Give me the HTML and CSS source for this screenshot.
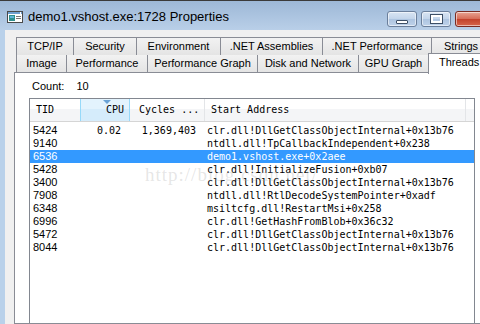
FILE: index.html
```html
<!DOCTYPE html>
<html>
<head>
<meta charset="utf-8">
<link rel="stylesheet" href="styles.css">
</head>
<body>
<div class="window">
  <div class="titlebar">
    <svg class="appicon" width="16" height="12" viewBox="0 0 16 12">
      <rect x="0.5" y="0.5" width="15" height="11" fill="#fff" stroke="#4a4a4a"/>
      <rect x="1" y="1" width="14" height="2" fill="#6f9fd0"/>
      <rect x="2" y="4" width="6" height="6" fill="#2f8f8f"/>
      <rect x="3" y="5" width="4" height="2" fill="#5fb7d9"/>
      <rect x="9" y="5" width="5" height="1" fill="#777"/>
      <rect x="9" y="7" width="5" height="1" fill="#777"/>
      <rect x="13" y="1" width="1" height="2" fill="#fff"/>
    </svg>
    <span class="title">demo1.vshost.exe:1728 Properties</span>
    <div class="caption-btns">
      <div class="cbtn"><span class="min-glyph"></span></div>
      <div class="cbtn"><span class="max-glyph"></span></div>
      <div class="cbtn close"></div>
    </div>
  </div>
  <div class="frame">
    <div class="frame-left"></div>
    <div class="client">
      <div class="tabs">
        <div class="tabrow">
          <div class="tab w57">TCP/IP</div>
          <div class="tab w63">Security</div>
          <div class="tab w84">Environment</div>
          <div class="tab w102">.NET Assemblies</div>
          <div class="tab w109">.NET Performance</div>
          <div class="tab w60">Strings</div>
        </div>
        <div class="tabrow row2">
          <div class="tab w50">Image</div>
          <div class="tab w81">Performance</div>
          <div class="tab w110">Performance Graph</div>
          <div class="tab w101">Disk and Network</div>
          <div class="tab w70">GPU Graph</div>
          <div class="tab selected">Threads</div>
        </div>
      </div>
      <div class="page">
        <div class="count"><span>Count:</span><span class="count-val">10</span></div>
        <div class="list">
          <div class="header">
            <div class="hcell c-tid">TID</div>
            <div class="hcell c-cpu sorted"><span class="sort-arrow"></span>CPU</div>
            <div class="hcell c-cyc">Cycles ...</div>
            <div class="hcell c-addr">Start Address</div>
            <div class="hcell c-fill"></div>
          </div>
          <div class="rows">
            <div class="row"><span class="tid">5424</span><span class="num">0.02</span><span class="num">1,369,403</span><span class="addr">clr.dll!DllGetClassObjectInternal+0x13b76</span></div>
            <div class="row"><span class="tid">9140</span><span class="num"></span><span class="num"></span><span class="addr">ntdll.dll!TpCallbackIndependent+0x238</span></div>
            <div class="row sel"><span class="tid">6536</span><span class="num"></span><span class="num"></span><span class="addr">demo1.vshost.exe+0x2aee</span></div>
            <div class="row"><span class="tid">5428</span><span class="num"></span><span class="num"></span><span class="addr">clr.dll!InitializeFusion+0xb07</span></div>
            <div class="row"><span class="tid">3400</span><span class="num"></span><span class="num"></span><span class="addr">clr.dll!DllGetClassObjectInternal+0x13b76</span></div>
            <div class="row"><span class="tid">7908</span><span class="num"></span><span class="num"></span><span class="addr">ntdll.dll!RtlDecodeSystemPointer+0xadf</span></div>
            <div class="row"><span class="tid">6348</span><span class="num"></span><span class="num"></span><span class="addr">msiltcfg.dll!RestartMsi+0x258</span></div>
            <div class="row"><span class="tid">6996</span><span class="num"></span><span class="num"></span><span class="addr">clr.dll!GetHashFromBlob+0x36c32</span></div>
            <div class="row"><span class="tid">5472</span><span class="num"></span><span class="num"></span><span class="addr">clr.dll!DllGetClassObjectInternal+0x13b76</span></div>
            <div class="row"><span class="tid">8044</span><span class="num"></span><span class="num"></span><span class="addr">clr.dll!DllGetClassObjectInternal+0x13b76</span></div>
          </div>
          <div class="watermark">http://blog.csdn.net/</div>
        </div>
      </div>
    </div>
  </div>
</div>
</body>
</html>
```

FILE: styles.css
```css
* { box-sizing: border-box; }
html, body { margin: 0; padding: 0; }
body {
  width: 480px;
  height: 324px;
  overflow: hidden;
  font-family: "Liberation Sans", Arial, sans-serif;
  font-size: 11px;
  color: #000;
  background: #f0f0f0;
}
.window {
  width: 480px;
  height: 324px;
  display: flex;
  flex-direction: column;
  overflow: hidden;
}
.titlebar {
  height: 30px;
  flex: none;
  border-top: 1px solid #3a3a3a;
  background: linear-gradient(#9db8d7, #b9cfe8);
  display: flex;
  align-items: center;
  padding-left: 7px;
  position: relative;
}
.appicon { flex: none; margin-top: 2px; }
.title {
  font-size: 13px;
  margin-left: 5px;
  margin-top: 2px;
  color: #000;
  white-space: nowrap;
}
.caption-btns {
  margin-left: auto;
  display: flex;
  gap: 4px;
  align-self: flex-start;
  margin-top: 10px;
  margin-right: -18px;
}
.cbtn {
  width: 30px;
  height: 16px;
  border: 1px solid #6b7f9b;
  border-radius: 3px;
  background: linear-gradient(#d9e5f3 0%, #c2d4ea 50%, #adc4e0 51%, #bed2ea 100%);
  box-shadow: inset 0 0 0 1px rgba(255,255,255,0.55);
  display: flex;
  align-items: center;
  justify-content: center;
}
.cbtn.close {
  width: 43px;
  border-color: #7a2b22;
  background: linear-gradient(#e8a493 0%, #d66b56 50%, #c2412b 51%, #d6664c 100%);
}
.min-glyph {
  width: 12px;
  height: 4px;
  margin-top: 5px;
  background: #fff;
  border: 1px solid #3d4f66;
  border-radius: 1px;
}
.max-glyph {
  width: 11px;
  height: 8px;
  border: 2px solid #fff;
  outline: 1px solid #3d4f66;
}
.frame {
  flex: 1;
  display: flex;
  min-height: 0;
}
.frame-left {
  width: 5px;
  flex: none;
  background: #b9d1ea;
}
.client {
  flex: 1;
  background: #f0f0f0;
  padding-top: 7px;
  padding-left: 9px;
  display: flex;
  flex-direction: column;
  min-width: 0;
}
.tabs {
  padding-left: 2px;
  position: relative;
  z-index: 1;
}
.tabrow {
  display: flex;
  height: 18px;
  white-space: nowrap;
}
.tabrow.row2 { height: 17px; }
.tab {
  flex: none;
  border: 1px solid #898c95;
  border-bottom: none;
  margin-right: -1px;
  background: linear-gradient(#f2f2f2, #e4e4e4);
  text-align: center;
  line-height: 16px;
  height: 18px;
}
.row2 .tab { height: 17px; border-top: none; line-height: 17px; }
.w57 { width: 58px; }
.w63 { width: 64px; }
.w84 { width: 85px; }
.w102 { width: 103px; }
.w109 { width: 110px; }
.w60 { width: 60px; }
.w50 { width: 51px; }
.w81 { width: 82px; }
.w110 { width: 111px; }
.w101 { width: 102px; }
.w70 { width: 71px; }
.row2 .tab.selected {
  width: 62px;
  background: #fff;
  border-top: 1px solid #898c95;
  height: 21px;
  margin-top: -2px;
  line-height: 16px;
  padding-left: 10px;
  text-align: left;
}
.page {
  flex: 1;
  background: #fff;
  border: 1px solid #898c95;
  border-right: none;
  margin-top: 0;
  padding-left: 14px;
  padding-top: 7px;
  display: flex;
  flex-direction: column;
  min-height: 0;
}
.count {
  padding-left: 3px;
  height: 13px;
  line-height: 13px;
  display: flex;
  gap: 12px;
}
.list {
  margin-top: 5px;
  width: 446px;
  flex: 1;
  border: 1px solid #828790;
  border-bottom: none;
  position: relative;
  overflow: hidden;
}
.header {
  display: flex;
  height: 23px;
  background: linear-gradient(#ffffff 0%, #ffffff 45%, #f4f5f7 46%, #f4f5f7 100%);
  border-bottom: 1px solid #d5d5d5;
  font-family: "DejaVu Sans Mono", "Liberation Mono", monospace;
  font-size: 10px;
}
.hcell {
  border-right: 1px solid #e3e5e8;
  line-height: 22px;
  position: relative;
  white-space: nowrap;
}
.c-tid { width: 51px; padding-left: 6px; }
.c-cpu { width: 49px; text-align: right; padding-right: 5px; }
.c-cyc { width: 75px; padding-left: 9px; }
.c-addr { width: 261px; padding-left: 6px; }
.c-fill { flex: 1; border-right: none; }
.sorted {
  background: linear-gradient(#e3f3fd 0%, #e3f3fd 45%, #d5ecfb 46%, #d5ecfb 100%);
  border-left: 1px solid #96d9f9;
  border-right: 1px solid #96d9f9;
  margin-left: -1px;
  width: 50px;
}
.sort-arrow {
  position: absolute;
  top: 1px;
  left: 22px;
  width: 0;
  height: 0;
  border-left: 4px solid transparent;
  border-right: 4px solid transparent;
  border-top: 4px solid #6aa3d6;
}
.rows { padding-top: 2px; }
.row {
  display: grid;
  grid-template-columns: 51px 49px 75px 1fr;
  height: 13px;
  line-height: 13px;
  white-space: nowrap;
}
.row.sel { background: #3399ff; color: #fff; }
.tid { padding-left: 3px; }
.num {
  text-align: right;
  padding-right: 9px;
  font-family: "DejaVu Sans Mono", "Liberation Mono", monospace;
  font-size: 10px;
}
.addr {
  padding-left: 2px;
  font-family: "DejaVu Sans Mono", "Liberation Mono", monospace;
  font-size: 10px;
}
.watermark {
  position: absolute;
  left: 115px;
  top: 65px;
  font-family: "Liberation Serif", serif;
  font-size: 19px;
  letter-spacing: 1px;
  color: rgba(170,170,170,0.3);
  pointer-events: none;
  white-space: nowrap;
}
```
